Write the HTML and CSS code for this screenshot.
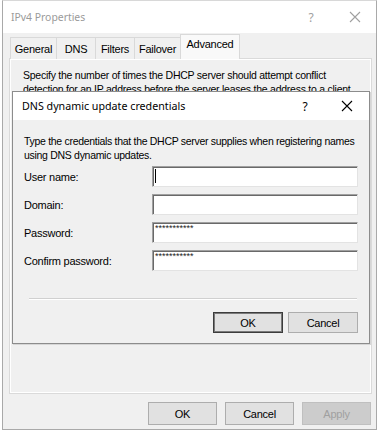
FILE: index.html
```html
<!DOCTYPE html>
<html>
<head>
<meta charset="utf-8">
<link rel="stylesheet" href="styles.css">
</head>
<body>
<div class="window">
  <div class="titlebar">
    <span class="title">IPv4 Properties</span>
    <span class="tb-help">?</span>
    <span class="tb-close"><svg width="12" height="12" viewBox="0 0 12 12"><path d="M1 1L11 11M11 1L1 11" stroke="#a0a0a0" stroke-width="1.1" fill="none"/></svg></span>
  </div>
  <div class="body">
    <div class="tabs">
      <div class="tab t-general">General</div>
      <div class="tab t-dns">DNS</div>
      <div class="tab t-filters">Filters</div>
      <div class="tab t-failover">Failover</div>
      <div class="tab t-advanced active">Advanced</div>
    </div>
    <div class="panel">
      <p class="panel-text">Specify the number of times the DHCP server should attempt conflict detection for an IP address before the server leases the address to a client.</p>
    </div>
    <div class="actions">
      <div class="btn">OK</div>
      <div class="btn">Cancel</div>
      <div class="btn disabled">Apply</div>
    </div>
  </div>

  <div class="dialog">
    <div class="d-titlebar">
      <span class="d-title">DNS dynamic update credentials</span>
      <span class="d-help">?</span>
      <span class="d-close"><svg width="12" height="12" viewBox="0 0 12 12"><path d="M1 1L11 11M11 1L1 11" stroke="#000" stroke-width="1.1" fill="none"/></svg></span>
    </div>
    <div class="d-content">
      <p class="d-desc">Type the credentials that the DHCP server supplies when registering names using DNS dynamic updates.</p>
      <div class="form">
        <div class="row"><span class="label">User name:</span><div class="input"><span class="caret"></span></div></div>
        <div class="row"><span class="label">Domain:</span><div class="input"></div></div>
        <div class="row"><span class="label">Password:</span><div class="input"><span class="dots">***********</span></div></div>
        <div class="row"><span class="label">Confirm password:</span><div class="input"><span class="dots">***********</span></div></div>
      </div>
      <div class="spacer"></div>
      <div class="sep"></div>
      <div class="d-actions">
        <div class="btn default">OK</div>
        <div class="btn">Cancel</div>
      </div>
    </div>
  </div>
</div>
</body>
</html>
```

FILE: styles.css
```css
* { box-sizing: border-box; }
html, body { margin: 0; padding: 0; background: #ffffff; }
body {
  font-family: "Liberation Sans", Arial, sans-serif;
  font-size: 10.5px;
  letter-spacing: -0.25px;
  color: #000;
}
.window {
  position: relative;
  margin-left: 2px;
  width: 375px;
  height: 430px;
  border: 1px solid #a9a9a9;
  border-top-color: #d8d8d8;
  background: #f0f0f0;
  display: flex;
  flex-direction: column;
}
.titlebar {
  height: 32px;
  background: #fff;
  display: flex;
  align-items: center;
  padding-left: 8px;
  font-family: "Noto Sans", "Open Sans", sans-serif;
  font-size: 10.4px;
  letter-spacing: 0;
  color: #9a9a9a;
}
.title { flex: 1; }
.tb-help { width: 44px; text-align: center; font-size: 12px; color: #a0a0a0; }
.tb-close { width: 44px; display: flex; justify-content: center; margin-right: -1px; }
.body {
  flex: 1;
  display: flex;
  flex-direction: column;
  padding: 1px 4px 0 6px;
}
.tabs {
  display: flex;
  align-items: flex-end;
  height: 25px;
  padding-left: 1px;
  position: relative;
  z-index: 1;
  margin-bottom: -1px;
}
.tab {
  height: 22px;
  padding-top: 5px;
  border: 1px solid #d9d9d9;
  border-bottom: none;
  margin-right: -1px;
  background: #f0f0f0;
  font-size: 11px;
  text-align: center;
}
.t-general { width: 47px; }
.t-dns { width: 40px; }
.t-filters { width: 40px; }
.t-failover { width: 47px; }
.t-advanced { width: 60px; }
.tab.active {
  height: 25px;
  padding-top: 3px;
  background: #f9f9f9;
  border-color: #d9d9d9;
}
.panel {
  height: 336px;
  border: 1px solid #dadada;
  box-shadow: inset 0 0 0 1px #fff;
  background: #f0f0f0;
  padding: 9px 13px;
}
.panel-text {
  margin: 0;
  line-height: 14px;
  width: 340px;
  height: 28px;
  overflow: hidden;
}
.actions {
  display: flex;
  justify-content: flex-end;
  gap: 8px;
  margin-top: 8px;
  margin-right: 1px;
}
.btn {
  width: 69px;
  height: 23px;
  border: 1px solid #adadad;
  background: #e1e1e1;
  display: flex;
  align-items: center;
  justify-content: center;
  font-size: 11px;
}
.btn.disabled {
  background: #cccccc;
  border-color: #bfbfbf;
  color: #a0a0a0;
}
.dialog {
  position: absolute;
  left: 9px;
  top: 90px;
  width: 358px;
  height: 253px;
  border: 1px solid #8c8c8c;
  background: #f0f0f0;
  display: flex;
  flex-direction: column;
  box-shadow: 1px 1px 0 #d6d6d6;
}
.d-titlebar {
  height: 28px;
  background: #fff;
  display: flex;
  align-items: center;
  padding-left: 9px;
  font-family: "Noto Sans", "Open Sans", sans-serif;
  font-size: 10.7px;
  letter-spacing: 0;
}
.d-title { flex: 1; }
.d-help { width: 40px; text-align: center; font-size: 12px; }
.d-close { width: 44px; display: flex; justify-content: center; margin-right: 0; }
.d-content {
  flex: 1;
  display: flex;
  flex-direction: column;
  padding: 14px 11px 10px 11px;
}
.d-desc {
  margin: 0 -6px 0 0;
  line-height: 14px;
  letter-spacing: -0.3px;
}
.form {
  display: flex;
  flex-direction: column;
  gap: 7px;
  margin-top: 4px;
}
.row {
  display: flex;
  align-items: center;
  height: 21px;
}
.label {
  width: 128px;
  font-size: 11px;
}
.input {
  width: 206px;
  height: 21px;
  background: #fff;
  border: 1px solid;
  border-color: #a0a0a0 #e3e3e3 #e3e3e3 #a0a0a0;
  box-shadow: inset 1px 1px 0 #696969;
  position: relative;
  padding: 1px 0 0 2px;
}
.caret {
  display: block;
  width: 1px;
  height: 14px;
  margin-top: 1px;
  background: #000;
}
.dots {
  display: block;
  font-size: 9px;
  line-height: 9px;
  color: #1a1a1a;
  letter-spacing: 0;
}
.spacer { flex: 1; }
.sep {
  height: 2px;
  margin: 0 1px 12px 5px;
  border-top: 1px solid #d0d0d0;
  border-bottom: 1px solid #fff;
}
.d-actions {
  display: flex;
  justify-content: flex-end;
  gap: 5px;
}
.d-actions .btn { width: 70px; height: 21px; }
.btn.default {
  border: 1px solid #3c3c3c;
  box-shadow: inset 0 0 0 1px #7a7a7a;
}
```
